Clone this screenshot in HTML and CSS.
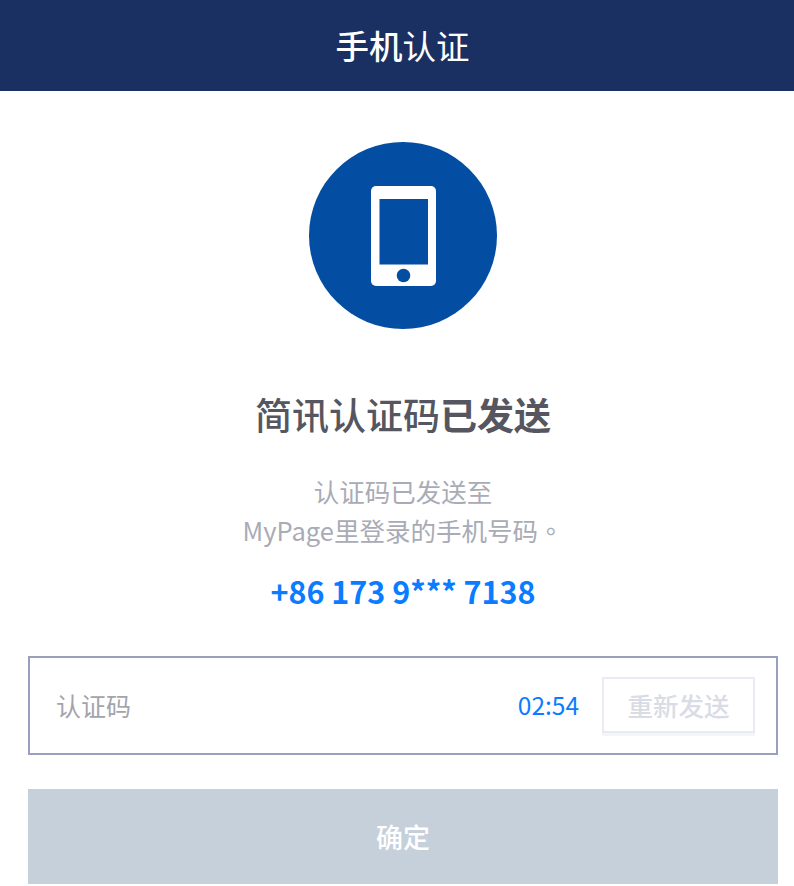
FILE: index.html
```html
<!DOCTYPE html>
<html lang="zh-CN">

<head>
    <meta charset="UTF-8">
    <title>手机认证</title>
    <link rel="stylesheet" href="styles.css">
</head>

<body>
    <header class="top-bar"><span class="heavy">手机</span>认证</header>

    <main class="content">
        <div class="phone-badge">
            <svg width="65" height="100" viewBox="0 0 65 100">
                <rect width="65" height="100" rx="5" fill="#fff" />
                <rect x="8.5" y="13" width="48.5" height="65.5" fill="#034ea2" />
                <circle cx="32.5" cy="89.5" r="6.8" fill="#034ea2" />
            </svg>
        </div>

        <h2 class="title">简讯认证码<span class="heavy">已发送</span></h2>
        <p class="desc">认证码已发送至<br>MyPage里登录的手机号码<span class="full-stop" lang="zh-TW">。</span></p>
        <p class="phone-number">+86 173 9*** 7138</p>

        <div class="code-box">
            <span class="code-label">认证码</span>
            <span class="timer">02:54</span>
            <button type="button" class="resend">重新发送</button>
        </div>

        <button type="button" class="confirm">确定</button>
    </main>
</body>

</html>
```

FILE: styles.css
```css
body {
    margin: 0;
    background-color: #fff;
    font-family: "Noto Sans CJK SC", "Noto Sans", sans-serif;
    overflow: hidden;
}

.top-bar {
    height: 91px;
    padding-left: 11px;
    line-height: 89px;
    text-align: center;
    font-size: 33.5px;
    color: #fff;
    background-color: #1a3062;
}

.top-bar .heavy {
    font-weight: 500;
}

.content {
    display: flex;
    flex-direction: column;
    align-items: center;
    padding: 51px 16px 0 28px;
}

.phone-badge {
    width: 188px;
    height: 187px;
    display: flex;
    align-items: center;
    justify-content: center;
    border-radius: 50%;
    background-color: #034ea2;
}

.title {
    margin: 55px 0 0;
    font-size: 37px;
    line-height: 60px;
    font-weight: 500;
    color: #55565f;
}

.title .heavy {
    font-weight: 700;
}

.desc {
    margin: 27px 0 0;
    font-size: 25.5px;
    line-height: 39px;
    text-align: center;
    color: #a9abb6;
}

.full-stop {
    font-family: "Noto Sans CJK TC", sans-serif;
}

.phone-number {
    margin: 19px 0 0;
    font-size: 30.5px;
    line-height: 46px;
    font-weight: 700;
    color: #0a7cff;
}

.code-box {
    box-sizing: border-box;
    width: 100%;
    height: 99px;
    margin-top: 42px;
    padding: 0 21px 2px 26px;
    display: flex;
    align-items: center;
    border: 2px solid #98a0bc;
}

.code-label {
    flex: 1;
    font-size: 25px;
    color: #a3a4ab;
}

.timer {
    margin-right: 23px;
    font-size: 24.5px;
    color: #0a7cff;
}

.resend {
    width: 153px;
    height: 56px;
    padding: 0;
    font-family: inherit;
    font-size: 25.5px;
    font-weight: 500;
    color: #d9dce5;
    background: #fff;
    border: 2px solid #e9ebf3;
    box-shadow: 0 3px 0 #f4f5f9;
}

.confirm {
    width: 100%;
    height: 95px;
    margin-top: 34px;
    padding: 0;
    font-family: inherit;
    font-size: 27px;
    font-weight: 500;
    color: #fff;
    background-color: #c6d0da;
    border: none;
}
```
